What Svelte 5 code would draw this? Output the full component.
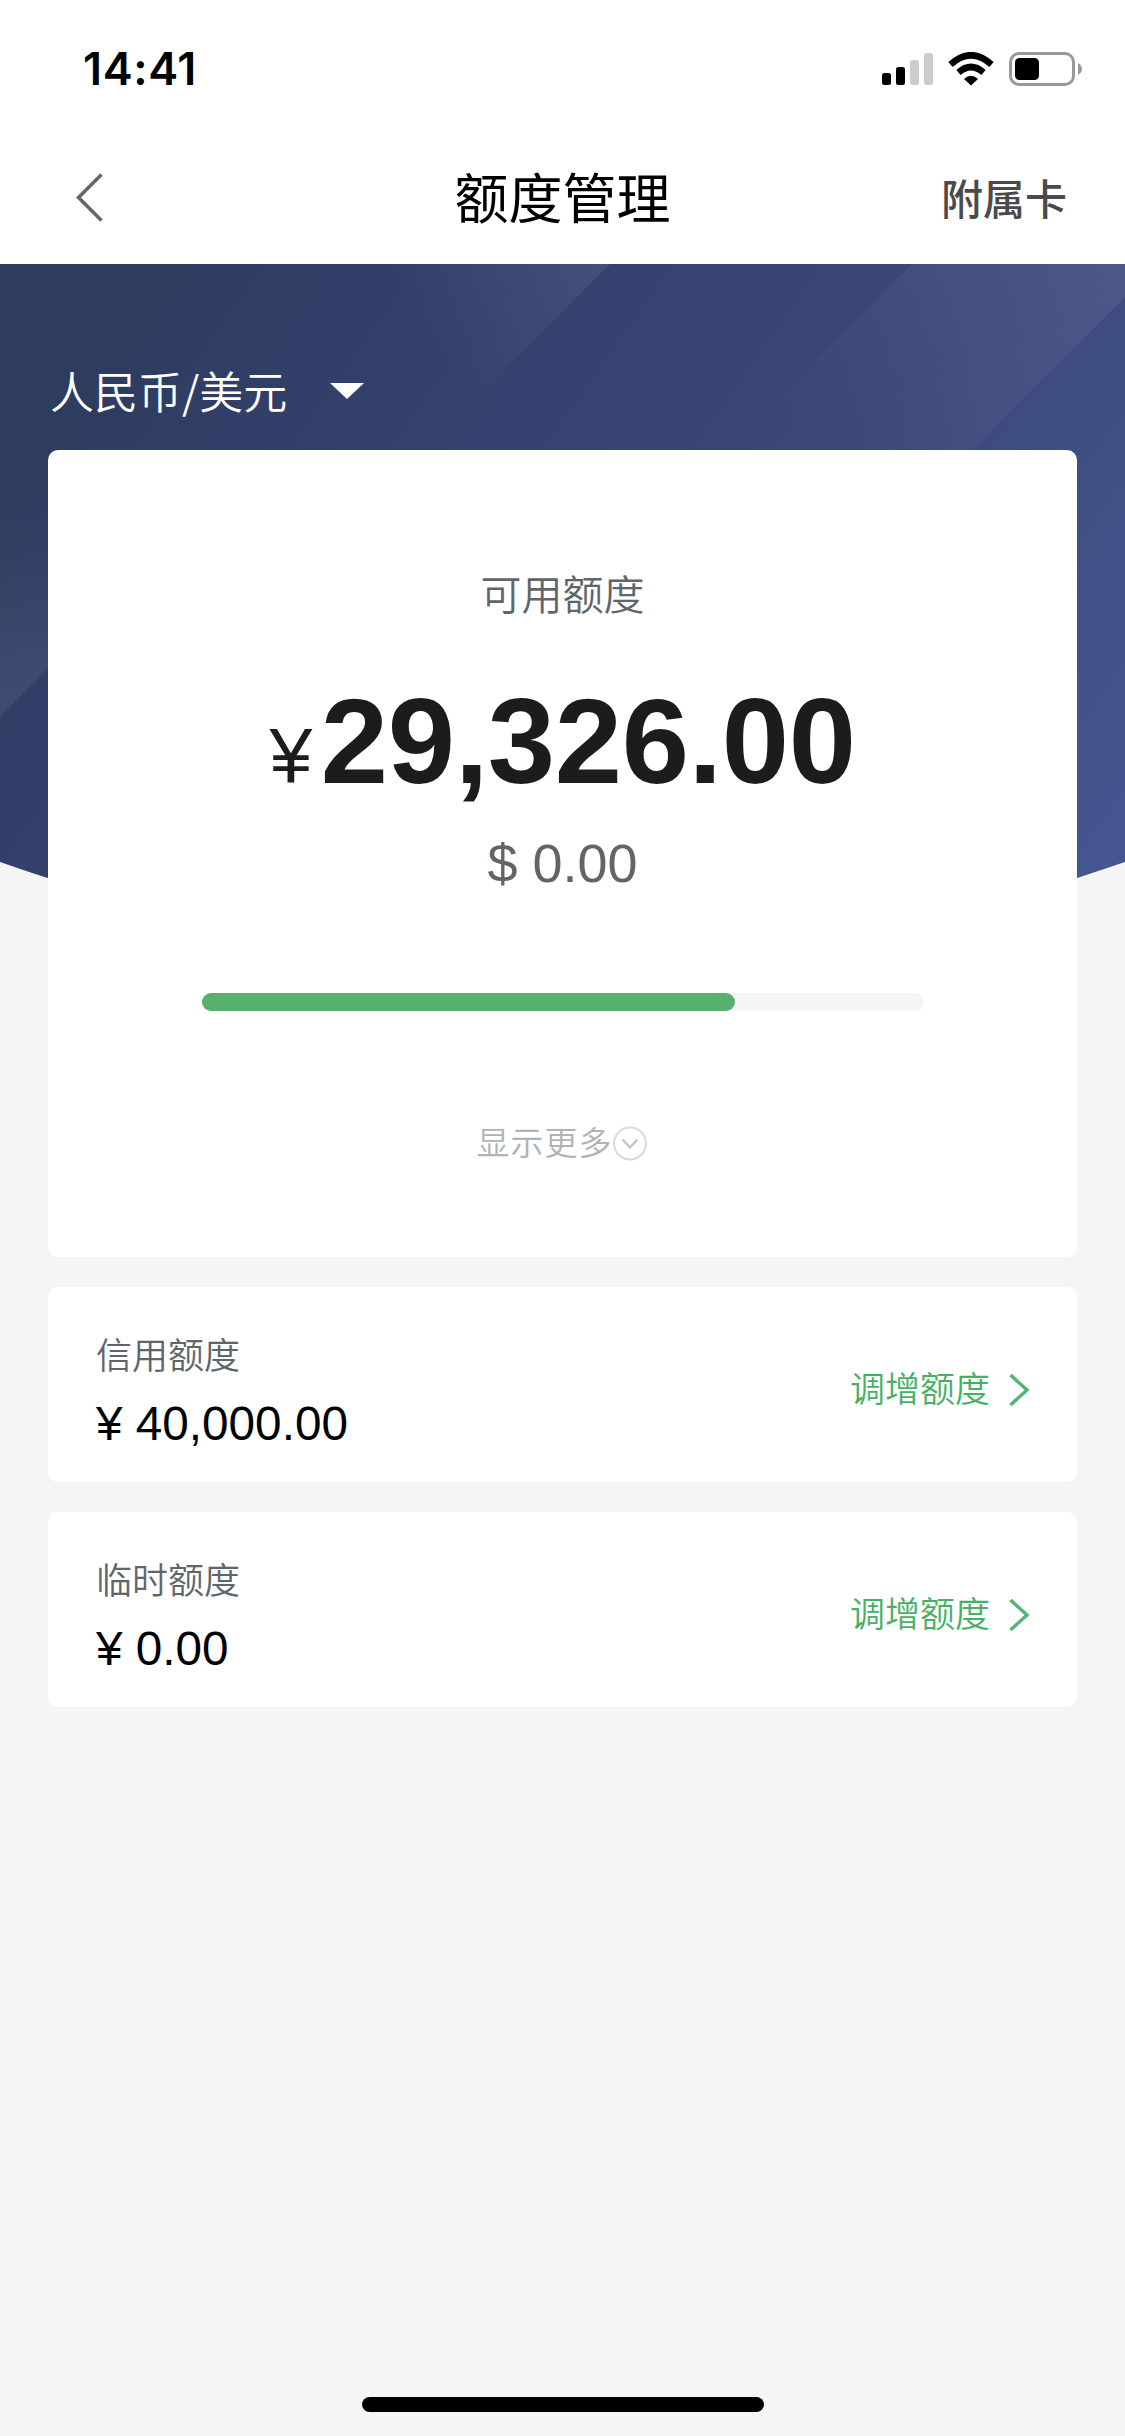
<script lang="ts">
  type Limit = { label: string; amount: string; action: string };

  const available = { symbol: '¥', cny: '29,326.00', usd: '$ 0.00' };
  const percent = 73.9;
  const limits: Limit[] = [
    { label: '信用额度', amount: '¥ 40,000.00', action: '调增额度' },
    { label: '临时额度', amount: '¥ 0.00', action: '调增额度' },
  ];
</script>

<div class="screen">
  <header>
    <div class="status">
      <span class="time">14:41</span>
      <div class="indicators">
        <svg class="signal" width="51" height="32" viewBox="0 0 51 32">
          <rect x="0" y="20" width="9" height="12" rx="2.5" />
          <rect x="14" y="14" width="9" height="18" rx="2.5" />
          <rect class="off" x="28" y="7" width="9" height="25" rx="2.5" />
          <rect class="off" x="42" y="0" width="9" height="32" rx="2.5" />
        </svg>
        <svg class="wifi" width="46" height="34" viewBox="0 0 46 34">
          <path d="M2.500 12.500Q23 -6 43.500 12.500" />
          <path d="M10.500 20.500Q23 9.500 35.500 20.500" />
          <path class="dot" d="M16 27Q23 20.500 30 27L23 33.500Z" />
        </svg>
        <svg class="battery" width="73" height="34" viewBox="0 0 73 34">
          <rect class="shell" x="1.500" y="1.500" width="63" height="31" rx="8.500" />
          <rect x="6" y="6" width="24" height="22" rx="4.500" />
          <path class="cap" d="M69 11Q73 13.500 73 17T69 23Z" />
        </svg>
      </div>
    </div>
    <nav>
      <svg class="back" width="28" height="52" viewBox="0 0 28 52">
        <path d="M25.500 2.500L2.500 25.500L25.500 48.500" />
      </svg>
      <h1>额度管理</h1>
      <span class="sub-card">附属卡</span>
    </nav>
  </header>

  <main>
    <svg class="backdrop" width="1125" height="720" viewBox="0 264 1125 720">
      <defs>
        <linearGradient id="base" gradientUnits="userSpaceOnUse" x1="150" y1="300" x2="1050" y2="930">
          <stop offset="0" stop-color="#2e3c60" />
          <stop offset="0.200" stop-color="#33406b" />
          <stop offset="0.600" stop-color="#3b4878" />
          <stop offset="1" stop-color="#45558f" />
        </linearGradient>
        <linearGradient id="streak-a" gradientUnits="userSpaceOnUse" x1="600" y1="264" x2="440" y2="360">
          <stop offset="0" stop-color="#fff" stop-opacity="0.070" />
          <stop offset="1" stop-color="#fff" stop-opacity="0" />
        </linearGradient>
        <linearGradient id="streak-b" gradientUnits="userSpaceOnUse" x1="1110" y1="280" x2="880" y2="510">
          <stop offset="0" stop-color="#fff" stop-opacity="0.070" />
          <stop offset="1" stop-color="#fff" stop-opacity="0" />
        </linearGradient>
        <linearGradient id="streak-c" gradientUnits="userSpaceOnUse" x1="0" y1="700" x2="0" y2="500">
          <stop offset="0" stop-color="#fff" stop-opacity="0.070" />
          <stop offset="1" stop-color="#fff" stop-opacity="0" />
        </linearGradient>
      </defs>
      <path fill="url(#base)" d="M0 264H1125V862Q562 1060 0 862Z" />
      <path fill="url(#streak-a)" d="M300 264H610L430 444H300Z" />
      <path fill="url(#streak-b)" d="M912 264H1125V297L972 450H726Z" />
      <path fill="url(#streak-c)" d="M0 480H237L0 717Z" />
    </svg>

    <div class="currency">
      <span>人民币/美元</span>
      <svg width="34" height="16" viewBox="0 0 34 16"><path d="M0 0H34L17 16Z" /></svg>
    </div>

    <section class="card available">
      <div class="title">可用额度</div>
      <div class="total"><span class="symbol">{available.symbol}</span>{available.cny}</div>
      <div class="usd">{available.usd}</div>
      <div class="track"><div class="fill" style="width: {percent}%"></div></div>
      <div class="more">
        <span>显示更多</span>
        <svg width="36" height="36" viewBox="0 0 36 36">
          <circle cx="17" cy="17.500" r="16" />
          <path d="M9.500 13.500L17 21.500L24.500 13.500" />
        </svg>
      </div>
    </section>

    {#each limits as limit}
      <section class="card limit">
        <div class="info">
          <div class="label">{limit.label}</div>
          <div class="amount">{limit.amount}</div>
        </div>
        <div class="action">
          <span>{limit.action}</span>
          <svg width="22" height="34" viewBox="0 0 22 34"><path d="M2.500 2L19 17L2.500 32" /></svg>
        </div>
      </section>
    {/each}
  </main>

  <div class="home-bar"></div>
</div>

<style>
  .screen {
    display: flex;
    flex-direction: column;
    box-sizing: border-box;
    width: 1125px;
    height: 2436px;
    padding-bottom: 24px;
    overflow: hidden;
    background: #f5f5f5;
    font-family: "Liberation Sans", "Noto Sans CJK SC", sans-serif;
  }
  svg { display: block; flex: none; }
  header {
    display: flex;
    flex-direction: column;
    height: 264px;
    background: #fff;
  }
  .status {
    display: flex;
    justify-content: space-between;
    align-items: center;
    height: 134px;
    padding: 2px 43px 0 83px;
  }
  .time {
    font: 600 45px/50px Inter, sans-serif;
    letter-spacing: 0.600px;
    color: #000;
  }
  .indicators { display: flex; align-items: center; }
  .off { fill: #ccc; }
  .wifi { margin-left: 15px; }
  .wifi path { fill: none; stroke: #000; stroke-width: 6.500; }
  .wifi .dot { fill: #000; stroke: none; }
  .battery { margin-left: 15px; }
  .battery .shell { fill: none; stroke: #999; stroke-width: 3; }
  .cap { fill: #999; }
  nav {
    display: grid;
    grid-template-columns: 1fr auto 1fr;
    align-items: center;
    height: 128px;
    padding: 0 58px;
  }
  .back { margin: 0 0 4px 18px; }
  .back path { fill: none; stroke: #666; stroke-width: 3.500; }
  h1 {
    margin: 0;
    font-size: 54px;
    font-weight: 400;
    line-height: 80px;
    color: #000;
  }
  .sub-card {
    justify-self: end;
    margin-bottom: 8px;
    font-size: 42px;
    font-weight: 500;
    color: #4a4a4c;
  }
  main {
    position: relative;
    display: flex;
    flex-direction: column;
    gap: 30px;
    padding: 0 48px;
  }
  /* backdrop runs behind the top half of the first card */
  .backdrop { position: absolute; left: 0; top: 0; }
  .currency {
    position: relative;
    display: flex;
    align-items: center;
    gap: 43px;
    height: 62px;
    padding: 96px 0 0 2px;
    margin-bottom: -2px;
    font-family: "Noto Sans CJK SC", sans-serif;
    font-size: 44px;
    font-weight: 350;
    color: #fff;
  }
  .currency span { margin-top: -2px; }
  .currency path { fill: #fff; }
  .card {
    position: relative;
    box-sizing: border-box;
    background: #fff;
    border-radius: 10px;
  }
  .available {
    display: flex;
    flex-direction: column;
    align-items: center;
    height: 807px;
    padding-top: 116px;
  }
  .title { font-size: 41px; font-weight: 350; line-height: 60px; color: #606569; }
  .total {
    margin-top: 45px;
    font-size: 121px;
    font-weight: 700;
    line-height: 140px;
    letter-spacing: -0.400px;
    color: #1c1c1c;
    white-space: nowrap;
  }
  .symbol { font-size: 77px; font-weight: 400; margin-right: 9px; }
  .usd { margin-top: 6px; font-size: 54px; line-height: 62px; color: #606569; }
  .track {
    width: 722px;
    height: 18px;
    margin-top: 99px;
    border-radius: 9px;
    background: #f5f5f5;
  }
  .fill { height: 18px; border-radius: 9px; background: #57b06c; }
  .more {
    display: flex;
    align-items: center;
    margin-top: 108px;
    font-size: 33px;
    font-weight: 350;
    line-height: 50px;
    letter-spacing: 1px;
    color: #b0b3b6;
  }
  .more svg { fill: none; stroke: #d8dadc; stroke-width: 2; }
  .more path { stroke: #c4c7ca; stroke-width: 2.500; }
  .limit {
    display: flex;
    justify-content: space-between;
    align-items: center;
    height: 195px;
    padding: 0 47px 0 48px;
  }
  .info { padding-top: 14px; }
  .label { font-size: 36px; font-weight: 350; line-height: 52px; color: #606569; }
  .amount { margin-top: 13px; font-size: 47.700px; line-height: 56px; color: #000; }
  .action {
    display: flex;
    align-items: center;
    gap: 18px;
    margin-top: 10px;
    font-size: 35px;
    font-weight: 350;
    line-height: 52px;
    color: #46b164;
  }
  .action path { fill: none; stroke: #57b477; stroke-width: 3.500; }
  .home-bar {
    align-self: center;
    width: 402px;
    height: 15px;
    margin-top: auto;
    border-radius: 8px;
    background: #000;
  }
</style>
